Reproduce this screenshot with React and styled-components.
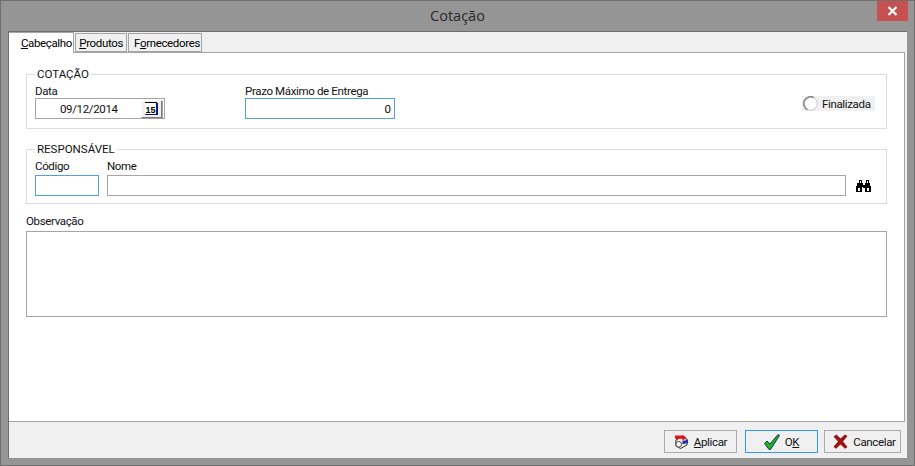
import React from "react";
import styled, { createGlobalStyle } from "styled-components";

const Global = createGlobalStyle`
  html, body { margin: 0; padding: 0; background: #959595; }
  * { box-sizing: border-box; }
`;
const Win = styled.div`
  width: 915px; height: 466px; background: #959595; display: flex; flex-direction: column;
  border: 1px solid #6f6f6f; padding: 0 7px 7px 7px;
  font-family: Roboto, "Liberation Sans", Arial, sans-serif; font-size: 11.5px; letter-spacing: -0.35px; color: #000;
`;
const TitleBar = styled.div`
  height: 30px; flex: none; display: flex; align-items: center; justify-content: center; position: relative;
  font-family: "Open Sans", sans-serif; font-size: 14.5px; letter-spacing: 0; color: #2a2a2a; padding-bottom: 1px;
`;
const Close = styled.div`
  position: absolute; right: -1px; top: 0; width: 31px; height: 20px; background: #c75050;
  display: flex; align-items: center; justify-content: center;
`;
const Client = styled.div`
  flex: 1; display: flex; flex-direction: column; background: #f0f0f0; border: 1px solid #6d6d6d; border-width: 1px 0 0 1px; min-height: 0;
`;
const TabRow = styled.div`
  height: 20px; flex: none; display: flex; align-items: flex-end; position: relative; z-index: 1;
`;
const Tab = styled.div`
  height: ${p => p.$active ? 21 : 19}px; width: ${p => p.$w}px; margin-right: 1px;
  margin-bottom: ${p => p.$active ? -1 : 0}px;
  background: ${p => p.$active ? "#fff" : "#f0f0f0"};
  border: 1px solid #a5a5a5; border-bottom: ${p => p.$active ? "none" : "1px solid #a5a5a5"};
  border-left: ${p => p.$active ? "none" : "1px solid #a5a5a5"};
  display: flex; align-items: center; justify-content: flex-end; padding-right: ${p => p.$pr}px;
  u { text-decoration: underline; }
`;
const Page = styled.div`
  height: 370px; flex: none; margin-right: 2px; background: #fff; border: 1px solid #a5a5a5; border-left: none;
  padding: 14px 17px 0 17px; display: flex; flex-direction: column;
`;
const Group = styled.fieldset`
  margin: 0 0 13px 0; padding: 0 8px; height: ${p => p.$h}px; border: 1px solid #dcdcdc; min-width: 0; flex: none;
  display: flex; align-items: flex-start;
  &:last-of-type { margin-bottom: 0; }
`;
const Legend = styled.legend`
  padding: 0 2px; line-height: 14px; color: #111; letter-spacing: 0;
`;
const Field = styled.div`
  display: flex; flex-direction: column; width: ${p => p.$w}px; margin-right: ${p => p.$mr || 0}px; flex: none;
  padding-top: ${p => p.$pt}px;
`;
const Label = styled.label`
  line-height: 13px; height: 13px; margin-bottom: ${p => p.$mb || 0}px; color: #111; white-space: nowrap;
`;
const Box = styled.div`
  height: 21px; background: #fff; border: 1px solid ${p => p.$focus ? "#569de5" : "#a5a5a5"};
  display: flex; align-items: center; justify-content: ${p => p.$right ? "flex-end" : "flex-start"};
  padding: 0 1px 0 2px; color: #111;
`;
const DateText = styled.span` flex: 1; padding-left: 22px; `;
const CalBtn = styled.div`
  width: 21px; height: 18px; background: #f0f0f0; border: 1px solid; border-color: #fff #7a7a7a #7a7a7a #fff;
  box-shadow: 1px 1px 0 #a0a0a0; display: flex; align-items: center; justify-content: center; margin-right: 1px;
`;
const Check = styled.div`
  margin-left: auto; margin-top: 15px; margin-right: 3px; width: 73px; height: 15px; background: #f0f0f0;
  display: flex; align-items: center; gap: 3px; color: #111; white-space: nowrap;
`;
const Find = styled.div`
  margin: 23px 0 0 10px; width: 16px; height: 14px; display: flex;
`;
const ObsLabel = styled(Label)` margin-top: 11px; margin-bottom: 3px; display: block; `;
const Memo = styled.div` height: 86px; flex: none; background: #fff; border: 1px solid #a5a5a5; `;
const Footer = styled.div`
  flex: 1; display: flex; justify-content: flex-end; align-items: flex-start; padding: 8px 6px 0 0;
`;
const Btn = styled.div`
  width: ${p => p.$w}px; height: 23px; border: 1px solid ${p => p.$def ? "#3399ff" : "#ababab"}; background: #f0f0f0;
  display: flex; align-items: center; justify-content: center; gap: 5px; color: #111;
  margin-left: ${p => p.$ml || 0}px; padding-left: ${p => p.$pl || 0}px;
`;

const Binoculars = () => (
  <svg width="16" height="14" viewBox="0 0 16 14" shapeRendering="crispEdges">
    <path fill="#000" d="M3 1h3v3h1v2h2V4h1V1h3v3h1v3h1v6h-6V8H9v1H7V8H6v5H0V7h1V4h2z" />
    <path fill="#fff" d="M4 2h1v2H4zM11 2h1v2h-1zM2 9h2v3H2zM11 9h2v3h-2z" />
  </svg>
);
const Cal = () => (
  <svg width="13" height="13" viewBox="0 0 13 13" shapeRendering="crispEdges">
    <rect x="0" y="0" width="12" height="1" fill="#000" />
    <rect x="0" y="1" width="11" height="11" fill="#fff" />
    <rect x="11" y="1" width="2" height="12" fill="#0a1a8c" />
    <rect x="0" y="12" width="13" height="1" fill="#0a1a8c" />
    <text x="0.5" y="10.5" fontFamily="Liberation Sans, sans-serif" fontSize="9" fontWeight="700" letterSpacing="0" fill="#000">15</text>
  </svg>
);
const Radio = () => (
  <svg width="17" height="15" viewBox="0 0 17 15" style={{ flex: "none" }}>
    <circle cx="8.5" cy="7.5" r="6.8" fill="#fff" stroke="#d5d5d5" strokeWidth="1.2" />
    <path d="M5.5 13.6 A6.8 6.8 0 0 1 11.5 1.4" fill="none" stroke="#888" strokeWidth="1.6" />
  </svg>
);
const ApplyIcon = () => (
  <svg width="15" height="16" viewBox="0 0 16 16" style={{ flex: "none" }}>
    <path d="M2 6 L7 3 L14 5 L14 11 L7 15 L2 12 Z" fill="#efefef" stroke="#222" strokeWidth="1" />
    <circle cx="5" cy="10.5" r="3" fill="#fff" stroke="#333" strokeWidth="1" />
    <path d="M9 7 L15 5.5 L15 9 L9 10.5 Z" fill="#1f2fb0" />
    <path d="M1 4 L1 1 L9 1 L9 0 L13 3.5 L9 7 L9 4.5 L4 4.5 L4 6 Z" fill="#e01616" />
  </svg>
);
const CheckIcon = () => (
  <svg width="16" height="16" viewBox="0 0 16 16" style={{ flex: "none" }}>
    <path d="M0.5 9.5 L3 7 L6 10 L14 0.5 L15.5 1.5 L6.5 15.5 L5 15.5 Z" fill="#22b022" stroke="#0a3d4a" strokeWidth="1" />
  </svg>
);
const XIcon = () => (
  <svg width="15" height="15" viewBox="0 0 15 15" style={{ flex: "none" }}>
    <path d="M0.5 2.5 L3.5 0.5 L7.5 4.5 L12 0.5 L14.5 2 L10 7.5 L14.5 13 L12 14.8 L7.5 10.5 L3 14.8 L0.5 12.8 L5 7.5 Z" fill="#9c1414" />
  </svg>
);

export default function App() {
  return (
    <>
      <Global />
      <Win>
        <TitleBar>
          Cotação
          <Close>
            <svg width="11" height="10" viewBox="0 0 11 10"><path d="M1.5 1 L9.5 9 M9.5 1 L1.5 9" stroke="#fff" strokeWidth="2.2" /></svg>
          </Close>
        </TitleBar>
        <Client>
          <TabRow>
            <Tab $active $w={65} $pr={1}><span><u>C</u>abeçalho</span></Tab>
            <Tab $w={52} $pr={3}><span><u>P</u>rodutos</span></Tab>
            <Tab $w={74} $pr={1}><span>F<u>o</u>rnecedores</span></Tab>
          </TabRow>
          <Page>
            <Group $h={62}>
              <Legend>COTAÇÃO</Legend>
              <Field $w={130} $mr={80} $pt={4}>
                <Label>Data</Label>
                <Box>
                  <DateText>09/12/2014</DateText>
                  <CalBtn><Cal /></CalBtn>
                </Box>
              </Field>
              <Field $w={150} $pt={4}>
                <Label>Prazo Máximo de Entrega</Label>
                <Box $focus $right>0&nbsp;</Box>
              </Field>
              <Check><Radio />Finalizada</Check>
            </Group>
            <Group $h={62}>
              <Legend>RESPONSÁVEL</Legend>
              <Field $w={64} $mr={8} $pt={4}>
                <Label $mb={2}>Código</Label>
                <Box $focus />
              </Field>
              <Field $w={739} $pt={4}>
                <Label $mb={2}>Nome</Label>
                <Box />
              </Field>
              <Find><Binoculars /></Find>
            </Group>
            <ObsLabel>Observação</ObsLabel>
            <Memo />
          </Page>
          <Footer>
            <Btn $w={73}><ApplyIcon /><span><u>A</u>plicar</span></Btn>
            <Btn $w={73} $def $ml={8}><CheckIcon /><span>O<u>K</u></span></Btn>
            <Btn $w={77} $ml={6} $pl={4}><XIcon /><span>Cancelar</span></Btn>
          </Footer>
        </Client>
      </Win>
    </>
  );
}
